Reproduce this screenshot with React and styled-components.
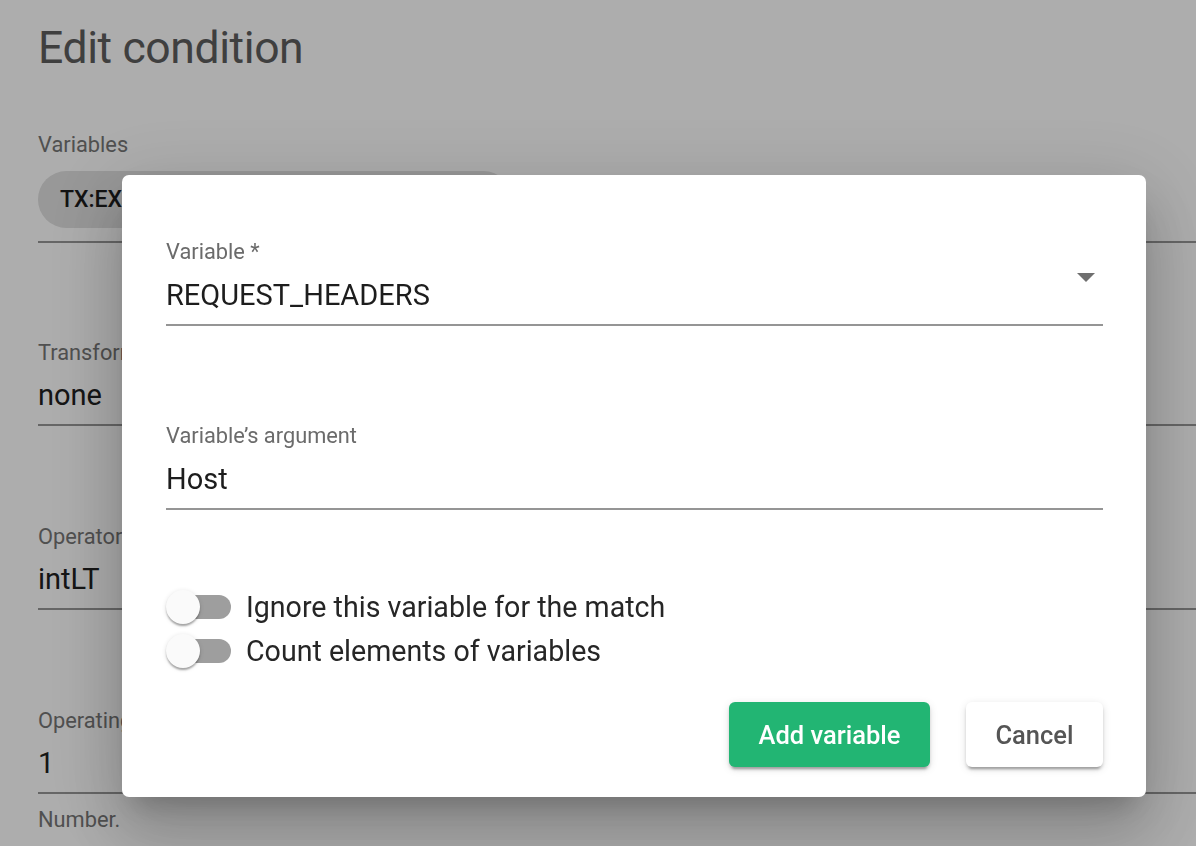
import React from "react";
import styled, { createGlobalStyle } from "styled-components";

const Global = createGlobalStyle`
  html, body { margin: 0; padding: 0; background: #fff; overflow: hidden; }
  body { font-family: Roboto, "Noto Sans", Arial, sans-serif; }
  * { box-sizing: border-box; }
`;

const Page = styled.div`
  width: 1196px;
  height: 846px;
  padding: 14px 0 0 38px;
  display: flex;
  flex-direction: column;
  overflow: hidden;
`;

const Title = styled.h1`
  margin: 0;
  font-size: 44.5px;
  line-height: 68px;
  font-weight: 400;
  color: #5e5e5e;
  letter-spacing: -0.4px;
`;

const BgField = styled.div`
  display: flex;
  flex-direction: column;
  margin-top: ${(p) => p.$mt}px;
  border-bottom: 2px solid #979797;
  margin-right: -40px;
`;

const BgLabel = styled.div`
  font-size: 21.8px;
  line-height: 24px;
  color: #767676;
`;

const BgValue = styled.div`
  font-size: 29px;
  line-height: 34px;
  color: #202020;
  padding: 13px 0 12px;
`;

const ChipWrap = styled.div`
  padding: 14px 0 13px;
`;

const Chip = styled.div`
  height: 57px;
  width: 474px;
  border-radius: 29px;
  background: #e0e0e0;
  display: flex;
  align-items: center;
  padding-left: 22px;
  font-size: 23px;
  font-weight: 500;
  color: #1c1c1c;
`;

const Helper = styled.div`
  font-size: 21.8px;
  line-height: 24px;
  color: #767676;
  margin-top: 14px;
`;

const Overlay = styled.div`
  position: fixed;
  inset: 0;
  background: rgba(0, 0, 0, 0.32);
  padding: 175px 0 0 122px;
`;

const Dialog = styled.div`
  width: 1024px;
  height: 622px;
  background: #fff;
  border-radius: 7px;
  box-shadow: 0 18px 25px -12px rgba(0, 0, 0, 0.2),
    0 40px 63px 5px rgba(0, 0, 0, 0.14), 0 15px 77px 13px rgba(0, 0, 0, 0.12);
  padding: 65px 43px 30px 44px;
  display: flex;
  flex-direction: column;
`;

const Field = styled.div`
  display: flex;
  flex-direction: column;
  margin-top: ${(p) => p.$mt || 0}px;
`;

const Label = styled.div`
  font-size: 21.8px;
  line-height: 24px;
  color: #6b6b6b;
`;

const InputBox = styled.div`
  display: flex;
  align-items: center;
  justify-content: space-between;
  padding: 14px 0 12px;
  border-bottom: 2px solid #959595;
  font-size: 29px;
  line-height: 34px;
  color: #1d1d1d;
`;

const Arrow = styled.span`
  align-self: flex-start;
  width: 0;
  height: 0;
  border-left: 9px solid transparent;
  border-right: 9px solid transparent;
  border-top: 9px solid #6f6f6f;
  margin: -5px 8px 0 0;
`;

const Switches = styled.div`
  display: flex;
  flex-direction: column;
  margin-top: 75px;
`;

const SwitchRow = styled.label`
  height: 44px;
  display: flex;
  align-items: center;
  gap: 15px;
  font-size: 28.6px;
  font-weight: 400;
  color: #262626;
`;

const SwitchTrack = styled.span`
  position: relative;
  width: 65px;
  height: 24px;
  display: inline-flex;
  align-items: center;
  &::before {
    content: "";
    position: absolute;
    left: 4px;
    right: 0;
    top: 0;
    bottom: 0;
    border-radius: 12px;
    background: #9e9e9e;
  }
`;

const Thumb = styled.span`
  position: relative;
  width: 34px;
  height: 34px;
  border-radius: 50%;
  background: #fafafa;
  box-shadow: 0 3px 2px -1px rgba(0, 0, 0, 0.2), 0 2px 2px 0 rgba(0, 0, 0, 0.14),
    0 1px 5px 0 rgba(0, 0, 0, 0.12);
`;

const Actions = styled.div`
  margin-top: auto;
  display: flex;
  justify-content: flex-end;
  gap: 36px;
`;

const Button = styled.button`
  height: 65px;
  padding: 0 29.5px;
  border: none;
  border-radius: 6px;
  font-family: Roboto, Arial, sans-serif;
  font-size: 25.5px;
  font-weight: 500;
  background: ${(p) => (p.$primary ? "#22b573" : "#fff")};
  color: ${(p) => (p.$primary ? "#fff" : "#555")};
  box-shadow: 0 5px 2px -3px rgba(0, 0, 0, 0.2), 0 3px 3px 0 rgba(0, 0, 0, 0.14),
    0 2px 8px 0 rgba(0, 0, 0, 0.12);
`;

function Toggle({ children }) {
  return (
    <SwitchRow>
      <SwitchTrack>
        <Thumb />
      </SwitchTrack>
      {children}
    </SwitchRow>
  );
}

export default function App() {
  return (
    <>
      <Global />
      <Page>
        <Title>Edit condition</Title>
        <BgField $mt={51}>
          <BgLabel>Variables</BgLabel>
          <ChipWrap>
            <Chip>TX:EXECUTABLE_VARIABLE</Chip>
          </ChipWrap>
        </BgField>
        <BgField $mt={98}>
          <BgLabel>Transformations</BgLabel>
          <BgValue>none</BgValue>
        </BgField>
        <BgField $mt={99}>
          <BgLabel>Operator</BgLabel>
          <BgValue>intLT</BgValue>
        </BgField>
        <BgField $mt={99}>
          <BgLabel>Operating value</BgLabel>
          <BgValue>1</BgValue>
        </BgField>
        <Helper>Number.</Helper>
      </Page>
      <Overlay>
        <Dialog>
          <Field>
            <Label>Variable *</Label>
            <InputBox>
              REQUEST_HEADERS
              <Arrow />
            </InputBox>
          </Field>
          <Field $mt={98}>
            <Label>Variable’s argument</Label>
            <InputBox>Host</InputBox>
          </Field>
          <Switches>
            <Toggle>Ignore this variable for the match</Toggle>
            <Toggle>Count elements of variables</Toggle>
          </Switches>
          <Actions>
            <Button $primary>Add variable</Button>
            <Button>Cancel</Button>
          </Actions>
        </Dialog>
      </Overlay>
    </>
  );
}
